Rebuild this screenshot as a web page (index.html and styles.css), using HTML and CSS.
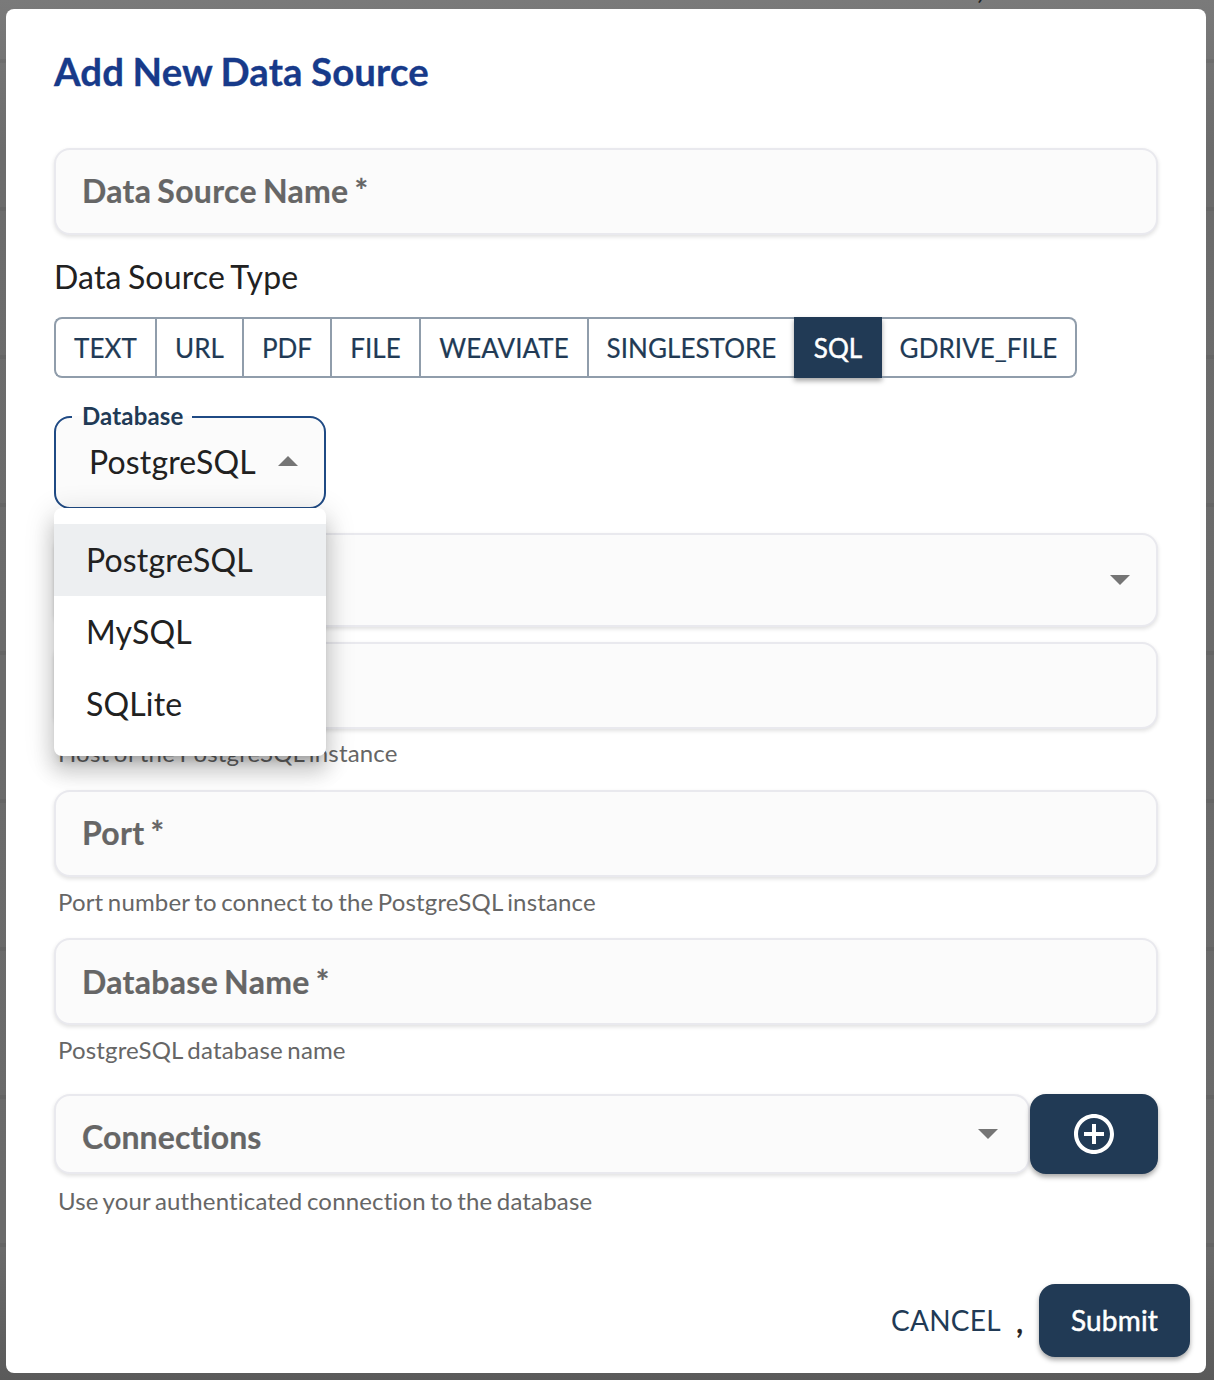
FILE: index.html
```html
<!DOCTYPE html>
<html lang="en">
<head>
<meta charset="utf-8">
<title>Add New Data Source</title>
<link rel="stylesheet" href="styles.css">
</head>
<body>
<div class="backdrop">
  <span class="backdrop-text">,</span>
  <main class="dialog">
    <h1 class="title"><span>Add New Data Source</span></h1>
    <div class="field field-name"><span>Data Source Name *</span></div>
    <div class="type-label"><span>Data Source Type</span></div>
    <div class="types">
      <button class="type type-text"><span>TEXT</span></button>
      <button class="type type-url"><span>URL</span></button>
      <button class="type type-pdf"><span>PDF</span></button>
      <button class="type type-file"><span>FILE</span></button>
      <button class="type type-weaviate"><span>WEAVIATE</span></button>
      <button class="type type-singlestore"><span>SINGLESTORE</span></button>
      <button class="type type-sql selected"><span>SQL</span></button>
      <button class="type type-gdrive"><span>GDRIVE_FILE</span></button>
    </div>
    <div class="select-wrap">
      <fieldset class="select">
        <legend class="legend"><span>Database</span></legend>
        <div class="select-value">
          <span>PostgreSQL</span>
          <svg class="caret" width="20" height="10" viewBox="0 0 20 10"><path d="M0 10 10 0l10 10z"/></svg>
        </div>
      </fieldset>
      <div class="menu">
        <div class="option active"><span>PostgreSQL</span></div>
        <div class="option"><span>MySQL</span></div>
        <div class="option"><span>SQLite</span></div>
      </div>
    </div>
    <div class="field field-driver">
      <svg class="caret" width="20" height="10" viewBox="0 0 20 10"><path d="M0 0h20L10 10z"/></svg>
    </div>
    <div class="field field-host"></div>
    <div class="helper helper-host"><span>Host of the PostgreSQL instance</span></div>
    <div class="field field-port"><span>Port *</span></div>
    <div class="helper"><span>Port number to connect to the PostgreSQL instance</span></div>
    <div class="field field-db"><span>Database Name *</span></div>
    <div class="helper"><span>PostgreSQL database name</span></div>
    <div class="connection-row">
      <div class="field field-connections">
        <span>Connections</span>
        <svg class="caret" width="20" height="10" viewBox="0 0 20 10"><path d="M0 0h20L10 10z"/></svg>
      </div>
      <button class="add" aria-label="Add connection">
        <svg width="48" height="48" viewBox="0 0 24 24"><path fill="#fff" d="M13 7h-2v4H7v2h4v4h2v-4h4v-2h-4V7zm-1-5C6.480 2 2 6.480 2 12s4.480 10 10 10 10-4.480 10-10S17.520 2 12 2zm0 18c-4.410 0-8-3.590-8-8s3.590-8 8-8 8 3.590 8 8-3.590 8-8 8z"/></svg>
      </button>
    </div>
    <div class="helper helper-connections"><span>Use your authenticated connection to the database</span></div>
    <footer class="actions">
      <button class="cancel"><span>CANCEL</span></button>
      <span class="comma">,</span>
      <button class="submit"><span>Submit</span></button>
    </footer>
  </main>
</div>
</body>
</html>
```

FILE: styles.css
```css
* { box-sizing: border-box; }
body {
  margin: 0;
  font-family: Lato, "Liberation Sans", sans-serif;
  font-size: 32px;
  letter-spacing: 0.15px;
  word-spacing: -2px;
  color: #212121;
}
button {
  margin: 0;
  padding: 0;
  border: 0;
  background: none;
  font: inherit;
  color: inherit;
  letter-spacing: inherit;
}
.backdrop {
  position: relative;
  height: 1380px;
  padding: 9px 8px 7px 6px;
  overflow: hidden;
  background:
    repeating-linear-gradient(to bottom, transparent 0 59px, rgba(0, 0, 0, 0.06) 59px 63px, transparent 63px 148px),
    linear-gradient(to bottom, #7a7a7a 0, #6c6c6c 150px, #6a6a6a 1250px, #5a5a5a 1380px);
}
.backdrop-text {
  position: absolute;
  left: 977px;
  top: -29px;
  font-size: 28px;
  font-weight: 700;
  line-height: 34px;
}
.dialog {
  position: relative;
  display: flex;
  flex-direction: column;
  height: 1364px;
  padding: 32px 48px 16px;
  border-radius: 8px;
  background: #fff;
}
.title {
  margin: 0 0 47px;
  font-size: 38.4px;
  line-height: 60px;
  font-weight: 700;
  letter-spacing: 0.1px;
  word-spacing: -1px;
  color: #173a8a;
  -webkit-text-stroke: 0.3px;
}
.field {
  display: flex;
  align-items: center;
  justify-content: space-between;
  flex: none;
  height: 87px;
  padding: 0 26px 2px;
  border: 2px solid #e9e9ee;
  border-radius: 16px;
  background: #fbfbfb;
  box-shadow: 0 2px 4px rgba(0, 0, 0, 0.12);
  font-weight: 700;
  letter-spacing: 0.3px;
  color: #666;
  -webkit-text-stroke: 0.2px;
}
.caret { display: block; margin-left: auto; fill: #757575; }
.type-label { margin-top: 18px; line-height: 48px; }
.types {
  display: flex;
  align-self: flex-start;
  height: 61px;
  margin-top: 16px;
  font-size: 26px;
  letter-spacing: 0.05px;
  color: #213a55;
  -webkit-text-stroke: 0.2px;
}
.type {
  border: solid #909dab;
  border-width: 2px 0 2px 2px;
  text-align: center;
}
.type-text { width: 101px; border-radius: 8px 0 0 8px; }
.type-url { width: 87px; }
.type-pdf { width: 88px; }
.type-file { width: 89px; }
.type-weaviate { width: 168px; }
.type-singlestore { width: 207px; }
.type-sql { width: 88px; }
.type-gdrive { width: 195px; border-width: 2px 2px 2px 0; border-radius: 0 8px 8px 0; }
.type.selected {
  padding-right: 2px;
  border-color: #213a55;
  background: #213a55;
  color: #fff;
  -webkit-text-stroke: 0.5px;
  box-shadow: 0 3px 5px rgba(0, 0, 0, 0.35);
}
.select-wrap { position: relative; width: 272px; margin-top: 26px; }
.select {
  height: 105px;
  min-width: 0;
  margin: 0;
  padding: 0 26px 0 16px;
  border: 2px solid #1f4a84;
  border-radius: 16px;
  background: #fbfbfb;
}
.legend {
  padding: 0 9px 2px 10px;
  font-size: 24px;
  line-height: 24px;
  font-weight: 700;
  color: #213a55;
}
.select-value {
  display: flex;
  align-items: center;
  justify-content: space-between;
  height: 62px;
  padding-left: 17px;
}
.menu {
  position: absolute;
  z-index: 2;
  left: 0;
  top: 104px;
  width: 272px;
  height: 248px;
  padding: 16px 0;
  border-radius: 8px;
  background: #fff;
  box-shadow: 0 10px 10px -6px rgba(0, 0, 0, 0.2), 0 16px 20px 2px rgba(0, 0, 0, 0.14), 0 6px 28px 4px rgba(0, 0, 0, 0.12);
}
.option { height: 72px; padding-left: 32px; line-height: 72px; }
.option.active { background: #edeff1; }
.field-driver { height: 94px; margin-top: 24px; padding: 0 26px; }
.field-host { margin-top: 15px; }
.helper {
  height: 40px;
  margin-top: 6px;
  padding-left: 4px;
  font-size: 24px;
  line-height: 37px;
  letter-spacing: 0.16px;
  word-spacing: -1.8px;
  color: #666;
}
.helper-host { line-height: 35px; }
.field-port, .field-db { margin-top: 15px; }
.field-db { padding-bottom: 0; }
.connection-row { display: flex; margin-top: 23px; }
.field-connections { flex: 1; height: 80px; padding: 4px 30px 0 26px; letter-spacing: 0.1px; }
.field-connections .caret { margin-bottom: 4px; }
.add {
  display: flex;
  align-items: center;
  justify-content: center;
  width: 128px;
  height: 80px;
  border-radius: 16px;
  background: #213a55;
  box-shadow: 0 3px 5px rgba(0, 0, 0, 0.35);
}
.helper-connections { margin-top: 8px; }
.actions {
  display: flex;
  align-items: center;
  justify-content: flex-end;
  margin: auto -32px 0 0;
}
.cancel { padding-bottom: 2px; font-size: 28px; letter-spacing: 0.3px; color: #213a55; }
.comma { width: 7px; margin: 0 16px 0 15px; -webkit-text-stroke: 0.6px; }
.submit {
  width: 151px;
  height: 73px;
  padding-bottom: 1px;
  border-radius: 16px;
  background: #213a55;
  box-shadow: 0 3px 5px rgba(0, 0, 0, 0.35);
  font-size: 28px;
  color: #fff;
  -webkit-text-stroke: 0.5px;
}
```
